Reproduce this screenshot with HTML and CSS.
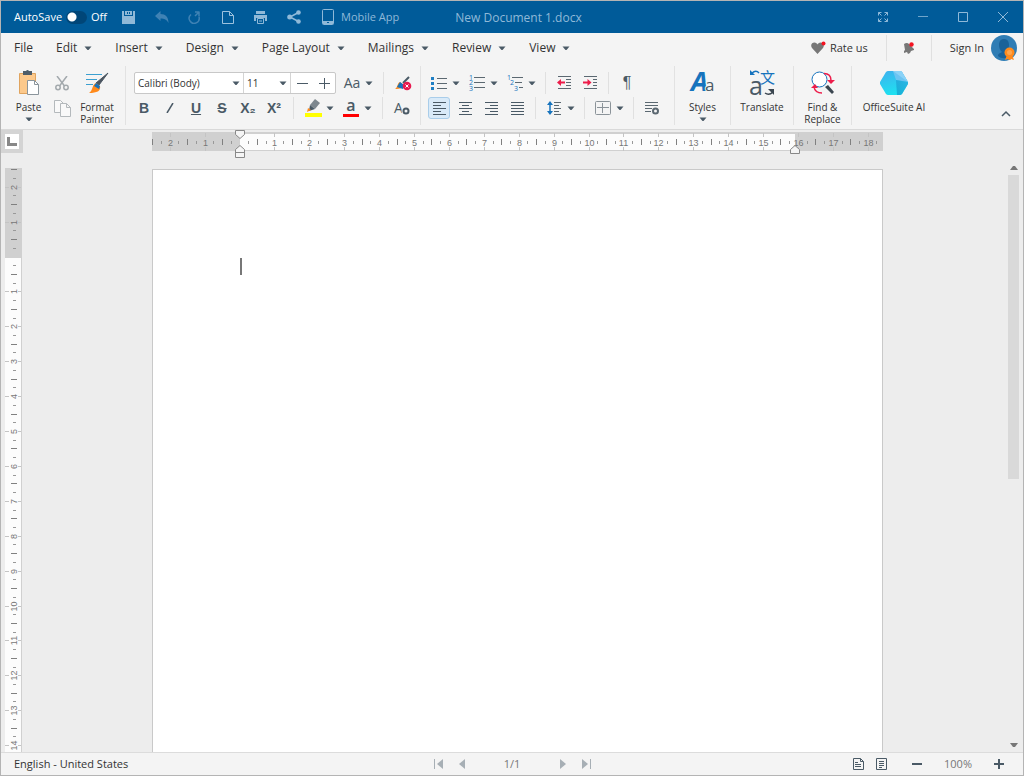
FILE: index.html
```html
<!DOCTYPE html>
<html lang="en">
<head>
  <title>New Document 1.docx</title>
  <meta charset="utf-8">
  <meta name="viewport" content="width=device-width, initial-scale=1">
  <link rel="stylesheet" href="styles.css">
</head>
<body>

  <!-- shared shapes -->
  <svg class="defs" width="0" height="0">
    <symbol id="caret" viewBox="0 0 8 5"><path d="M.500.500h7L4.500 4h-1z" fill="#4a5a66"/></symbol>
    <linearGradient id="hex" x1="0" y1="0" x2="0.300" y2="1">
      <stop offset="0" stop-color="#3fb0ee"/><stop offset="1" stop-color="#1fe0f0"/>
    </linearGradient>
    <linearGradient id="hexdark" x1="1" y1="0" x2="0" y2="1">
      <stop offset="0" stop-color="#2aa5dd"/><stop offset="1" stop-color="#0f8fc4"/>
    </linearGradient>
  </svg>

  <header class="titlebar">
    <div class="quick">
      <label class="autosave">AutoSave <input type="checkbox" class="toggle"> <span>Off</span></label>
      <button class="tb" aria-label="Save"><svg width="13" height="13" viewBox="0 0 13 13" fill="#8fb9d8"><path d="M0 0h2v5h9V0h2v13h-2V8H2v5H0z"/><path d="M2 8h9v5H2zM3 0h7v4H3z"/><path d="M5 1h1v2H5zM7 1h1v2H7z" fill="#005b99"/></svg></button>
      <button class="tb" aria-label="Undo"><svg width="14" height="12" viewBox="0 0 14 12"><path d="M0 5l5.500-5v3c5 0 8 3 8 9-2-3.500-4-4.500-8-4.500V10z" fill="#3f82b4"/></svg></button>
      <button class="tb" aria-label="Redo"><svg width="13" height="13" viewBox="0 0 13 13" fill="none" stroke="#3f82b4" stroke-width="1.500"><path d="M3 3.500A5 5 0 1 0 11 6M7 1h4.500M11 1v4.500M11 1L7 5"/></svg></button>
      <button class="tb" aria-label="New document"><svg width="12" height="13" viewBox="0 0 12 13" fill="none" stroke="#9cc2de"><path d="M.500.500h7l4 4v8H.500zM7.500.500v4h4"/></svg></button>
      <button class="tb" aria-label="Print"><svg width="13" height="13" viewBox="0 0 13 13"><path d="M2 0h9v3H2zM0 4h13v6h-2V7H2v3H0z" fill="#8fb9d8"/><path d="M3.500 7.500h6v5h-6z" fill="#005b99" stroke="#8fb9d8"/><path d="M5 10h3" stroke="#8fb9d8"/></svg></button>
      <button class="tb" aria-label="Share"><svg width="14" height="14" viewBox="0 0 14 14" fill="#8fb9d8"><path d="M11.500 2.500L3 7l8.500 4.500" fill="none" stroke="#8fb9d8" stroke-width="1.500"/><circle cx="11.500" cy="2.500" r="2.300"/><circle cx="2.700" cy="7" r="2.500"/><circle cx="11.500" cy="11.500" r="2.300"/></svg></button>
      <button class="tb mobile"><svg width="12" height="16" viewBox="0 0 12 16"><rect x=".5" y=".5" width="11" height="15" rx="1" fill="none" stroke="#8fb9d8"/><path d="M1 12h10v3H1z" fill="#8fb9d8"/><path d="M5 13h2v1H5z" fill="#005b99"/></svg> Mobile App</button>
    </div>
    <h1>New Document 1.docx</h1>
    <div class="window-controls">
      <button aria-label="Full screen"><svg width="10" height="10" viewBox="0 0 10 10" fill="none" stroke="#8fb9d8"><path d="M.500 3.500v-3h3M.500.500l3 3M6.500.500h3v3M9.500.500l-3 3M.500 6.500v3h3M.500 9.500l3-3M9.500 6.500v3h-3M9.500 9.500l-3-3"/></svg></button>
      <button aria-label="Minimize"><svg width="10" height="10" viewBox="0 0 10 10"><path d="M0 4.500h10" stroke="#6fa5cb"/></svg></button>
      <button aria-label="Maximize"><svg width="10" height="10" viewBox="0 0 10 10"><path d="M.500.500h9v9h-9z" fill="none" stroke="#8fb9d8"/></svg></button>
      <button aria-label="Close"><svg width="10" height="10" viewBox="0 0 10 10"><path d="M0 0l10 10M10 0L0 10" stroke="#8fb9d8"/></svg></button>
    </div>
  </header>

  <nav class="menubar">
    <button>File</button>
    <button>Edit <svg class="caret"><use href="#caret"/></svg></button>
    <button>Insert <svg class="caret"><use href="#caret"/></svg></button>
    <button>Design <svg class="caret"><use href="#caret"/></svg></button>
    <button>Page Layout <svg class="caret"><use href="#caret"/></svg></button>
    <button>Mailings <svg class="caret"><use href="#caret"/></svg></button>
    <button>Review <svg class="caret"><use href="#caret"/></svg></button>
    <button>View <svg class="caret"><use href="#caret"/></svg></button>
    <div class="account">
      <button class="rate"><svg width="15" height="14" viewBox="0 0 15 14"><path d="M6.500 13L1 7C-1 4 1 1.500 3.500 1.500c1.500 0 2.500 1 3 2 .5-1 1.500-2 3-2C12 1.500 14 4 12 7z" fill="#777"/><circle cx="12.500" cy="2.500" r="2" fill="#f31321"/></svg> Rate us</button>
      <button class="bell" aria-label="Notifications"><svg width="12" height="13" viewBox="0 0 12 13"><path d="M1 2q3-2 5 0l5 5v1L8 9l-1 2-2 1-1-2-3 1V9l1-1z" fill="#777"/><circle cx="8.500" cy="2.500" r="2.200" fill="#f31321"/></svg></button>
      <button class="signin">Sign In
        <svg width="26" height="26" viewBox="0 0 26 26"><circle cx="13" cy="13" r="13" fill="#2f7db5"/><path d="M7 21c0-3 3-3 4-4-2-2-3-4-3-7 0-4 2-6 5-6s5 2 5 6c0 3-1 5-3 7 1 1 4 1 4 4-3 3-9 3-12 0z" fill="#1a6299"/><path d="M16 20l-2 5 3-1 1 1h1l1-1 3 1-2-5z" fill="#ff8a1c"/><circle cx="18.500" cy="17.500" r="5" fill="#ff8a1c"/><circle cx="18.500" cy="17.500" r="2.500" fill="#ffa64d"/></svg>
      </button>
    </div>
  </nav>

  <section class="ribbon">
    <div class="group clipboard">
      <button class="big paste"><svg width="22" height="26" viewBox="0 0 22 26"><path d="M1.500 3.500h16v20h-16z" fill="#fcc98c" stroke="#e0a45f"/><path d="M5 1h3q1.500-2 3 0h3v4H5z" fill="#4e5d69"/><path d="M9.500 10.500h7l4 4v10h-11z" fill="#fff" stroke="#8b959c"/><path d="M16.500 10.500v4h4" fill="none" stroke="#8b959c"/></svg><span>Paste</span><svg class="caret"><use href="#caret"/></svg></button>
      <div class="stack">
        <button class="tool" aria-label="Cut"><svg width="14" height="15" viewBox="0 0 14 15" fill="none" stroke="#a3a9ad" stroke-width="1.500"><path d="M2 0l7.500 10M12 0L4.500 10"/><circle cx="3" cy="11.500" r="2.200"/><circle cx="11" cy="11.500" r="2.200"/></svg></button>
        <button class="tool" aria-label="Copy"><svg width="17" height="17" viewBox="0 0 17 17" fill="#f9f9f9" stroke="#b4b9bc"><path d="M.500.500h6l3 3v9h-9z"/><path d="M6.500 3.500h6l4 4v9h-10zM12.500 3.500v4h4"/></svg></button>
      </div>
      <button class="big painter"><svg width="24" height="24" viewBox="0 0 24 24"><path d="M1 3.500h16M1 8.500h11M1 13.500h7" stroke="#3b9fd0"/><path d="M23 2L14 14l-3-2z" fill="#4a5560" stroke="#4a5560"/><path d="M11 12l4 3c1 5-3 7-11 7 4-2 3-9 7-10z" fill="#ff8a1c"/><path d="M11 12l4 3-1 3-5-3z" fill="#1673bd"/></svg><span>Format<br>Painter</span></button>
    </div>

    <div class="group font">
      <div class="row">
        <div class="fields">
          <div class="combo family"><select aria-label="Font"><option>Calibri (Body)</option></select><svg class="caret"><use href="#caret"/></svg></div>
          <div class="combo size"><select aria-label="Font size"><option>11</option></select><svg class="caret"><use href="#caret"/></svg></div>
          <button class="step" aria-label="Shrink font"><svg width="11" height="11"><path d="M0 5.500h11" stroke="#4a5a66"/></svg></button>
          <button class="step" aria-label="Grow font"><svg width="11" height="11"><path d="M0 5.500h11M5.500 0v11" stroke="#4a5a66"/></svg></button>
        </div>
        <button class="drop case"><span>Aa</span><svg class="caret"><use href="#caret"/></svg></button>
        <i class="sep"></i>
        <button class="tool" aria-label="Clear formatting"><svg width="17" height="16" viewBox="0 0 17 16"><path d="M14 2L8 8" stroke="#4a5a66" stroke-width="2"/><path d="M5 7l4 3c0 3-4 4-9 4 3-2 2-6 5-7z" fill="#ff8a1c"/><path d="M5 7l4 3-1 4-6-2z" fill="#1673bd"/><circle cx="12" cy="11" r="4.300" fill="#e8194f"/><path d="M10.500 9.500l3 3m0-3l-3 3" stroke="#fff"/></svg></button>
      </div>
      <div class="row">
        <button class="tool glyph"><b>B</b></button>
        <button class="tool glyph" aria-label="Italic"><svg width="8" height="10" viewBox="0 0 8 10"><path d="M1 10L7 0" stroke="#4a5a66" stroke-width="1.500"/></svg></button>
        <button class="tool glyph"><u>U</u></button>
        <button class="tool glyph"><s>S</s></button>
        <button class="tool glyph">X₂</button>
        <button class="tool glyph">X²</button>
        <i class="sep"></i>
        <button class="drop" aria-label="Highlight"><svg width="17" height="18" viewBox="0 0 17 18"><path d="M10 0l5 4-5 6-5-4z" fill="#7d878e"/><path d="M5 6l5 4-6 2z" fill="#4a5a66"/><path d="M3 9l3 2-4 2z" fill="#ff8a1c"/><path d="M0 14h17v4H0z" fill="#ff0"/></svg><svg class="caret"><use href="#caret"/></svg></button>
        <button class="drop color"><span>a</span><svg class="caret"><use href="#caret"/></svg></button>
        <i class="sep"></i>
        <button class="tool" aria-label="Font settings"><svg class="lettered" width="17" height="15" viewBox="0 0 17 15"><text class="grey" x="0" y="12" font-size="14">A</text><circle cx="12" cy="10" r="4.500" fill="#f4f4f4"/><circle cx="12" cy="10" r="2.500" fill="none" stroke="#4a5a66" stroke-width="2"/></svg></button>
      </div>
    </div>

    <div class="group paragraph">
      <div class="row">
        <button class="drop" aria-label="Bullets"><svg width="16" height="14" viewBox="0 0 16 14"><path d="M6 2.500h10M6 7.500h10M6 12.500h10" stroke="#5b6871"/><path d="M0 1h3v3H0zM0 6h3v3H0zM0 11h3v3H0z" fill="#1f7fc4"/></svg><svg class="caret"><use href="#caret"/></svg></button>
        <button class="drop" aria-label="Numbering"><svg class="lettered" width="16" height="16" viewBox="0 0 16 16"><path d="M5 2.500h11M5 7.500h11M5 12.500h11" stroke="#5b6871"/><g class="blue" font-size="7"><text x="0" y="5">1</text><text x="0" y="10">2</text><text x="0" y="16">3</text></g></svg><svg class="caret"><use href="#caret"/></svg></button>
        <button class="drop" aria-label="Multilevel list"><svg class="lettered" width="16" height="16" viewBox="0 0 16 16"><path d="M5 2.500h11M8 7.500h7M12 12.500h4" stroke="#5b6871"/><g class="blue" font-size="7"><text x="0" y="5">1</text><text x="3" y="10">2</text><text x="7" y="16">3</text></g></svg><svg class="caret"><use href="#caret"/></svg></button>
        <i class="sep"></i>
        <button class="tool" aria-label="Decrease indent"><svg width="14" height="14" viewBox="0 0 14 14"><path d="M1 .500h13M9 3.500h5M9 6.500h5M9 9.500h5M1 12.500h13" stroke="#5b6871"/><path d="M2 6.500h6" stroke="#ed1c4a" stroke-width="2"/><path d="M0 6.500L4 3v7z" fill="#ed1c4a"/></svg></button>
        <button class="tool" aria-label="Increase indent"><svg width="14" height="14" viewBox="0 0 14 14"><path d="M1 .500h13M10 3.500h4M10 6.500h4M10 9.500h4M1 12.500h13" stroke="#5b6871"/><path d="M0 6.500h6" stroke="#ed1c4a" stroke-width="2"/><path d="M8.500 6.500L4.500 3v7z" fill="#ed1c4a"/></svg></button>
        <i class="sep"></i>
        <button class="tool pilcrow" aria-label="Formatting marks">¶</button>
      </div>
      <div class="row">
        <button class="tool active" aria-label="Align left"><svg width="13" height="13"><path d="M0 .500h13M0 3.500h8M0 6.500h13M0 9.500h8M0 12.500h13" stroke="#4a5a66"/></svg></button>
        <button class="tool" aria-label="Center"><svg width="13" height="13"><path d="M0 .500h13M3 3.500h7M0 6.500h13M3 9.500h7M0 12.500h13" stroke="#4a5a66"/></svg></button>
        <button class="tool" aria-label="Align right"><svg width="13" height="13"><path d="M0 .500h13M5 3.500h8M0 6.500h13M5 9.500h8M0 12.500h13" stroke="#4a5a66"/></svg></button>
        <button class="tool" aria-label="Justify"><svg width="13" height="13"><path d="M0 .500h13M0 3.500h13M0 6.500h13M0 9.500h13M0 12.500h13" stroke="#4a5a66"/></svg></button>
        <i class="sep"></i>
        <button class="drop" aria-label="Line spacing"><svg width="14" height="14" viewBox="0 0 14 14"><path d="M7 1.500h7M7 4.500h5M7 7.500h7M7 10.500h5M7 13.500h7" stroke="#5b6871"/><path d="M3 3v8" stroke="#1673bd" stroke-width="1.500"/><path d="M3 0l3 4H0zM3 14l3-4H0z" fill="#1673bd"/></svg><svg class="caret"><use href="#caret"/></svg></button>
        <i class="sep"></i>
        <button class="drop" aria-label="Borders"><svg width="16" height="14" viewBox="0 0 16 14" fill="none" stroke="#8b9399"><rect x=".5" y=".5" width="15" height="13" rx="1"/><path d="M7.500 2v10M2 6.500h12"/></svg><svg class="caret"><use href="#caret"/></svg></button>
        <i class="sep"></i>
        <button class="tool" aria-label="Paragraph settings"><svg width="14" height="14" viewBox="0 0 14 14" fill="none" stroke="#5b6871"><path d="M0 1.500h13M0 4.500h13M0 7.500h7M0 10.500h6"/><circle cx="10.500" cy="10" r="2.500" stroke-width="2"/></svg></button>
      </div>
    </div>

    <div class="group"><button class="big styles"><svg class="lettered" width="24" height="26" viewBox="0 0 24 26"><text class="blue" x="0" y="21" font-size="27" font-weight="bold" font-style="italic">A</text><text class="grey halo" x="14" y="21" font-size="17">a</text></svg><span>Styles</span><svg class="caret"><use href="#caret"/></svg></button></div>
    <div class="group"><button class="big translate"><svg class="lettered" width="26" height="28" viewBox="0 0 26 28"><text class="grey" x="0" y="26" font-size="25">a</text><text class="blue cjk" x="11" y="14" font-size="15">文</text><path d="M3 4q4-3.500 7 0" fill="none" stroke="#1673bd" stroke-width="1.500"/><path d="M1 1v5h5z" fill="#1673bd"/><path d="M16 24q4 3 8-1" fill="none" stroke="#3b4650" stroke-width="1.500"/><path d="M19 20h6v6z" fill="#3b4650"/></svg><span>Translate</span></button></div>
    <div class="group"><button class="big find"><svg width="24" height="26" viewBox="0 0 24 26" fill="none"><circle cx="8.500" cy="9.500" r="7.500" fill="#fff" stroke="#1673bd"/><path d="M14 17l3-2 6 7-2 2z" fill="#3b4650"/><path d="M13 3.500q7 0 7 7M11 23q-7 0-8-6" stroke="#ed1c4a" stroke-width="1.500"/><path d="M16 10h8l-4 4zM0 18l4-4 3 4z" fill="#ed1c4a"/></svg><span>Find &amp;<br>Replace</span></button></div>
    <div class="group"><button class="big ai"><svg width="28" height="26" viewBox="0 0 28 26"><path d="M8 1h12q1 0 2 1l6 10v2l-6 10q-1 1-2 1H8q-1 0-2-1L0 14v-2L6 2q1-1 2-1z" fill="url(#hex)"/><path d="M13 1h7q1 0 2 1l6 10-12-2z" fill="#6cc4f2"/><path d="M16 10l12 2v2l-6 10q-1 1-2 1h-3z" fill="url(#hexdark)" opacity=".6"/><path d="M13 1h7q1 0 2 1l6 10z" fill="#8ad2f7"/></svg><span>OfficeSuite AI</span></button></div>
    <button class="collapse" aria-label="Collapse ribbon"><svg width="10" height="7"><path d="M1 6l4-4 4 4" fill="none" stroke="#4a5a66" stroke-width="1.500"/></svg></button>
  </section>

  <main class="workspace">
    <button class="tabstop" aria-label="Tab stop"><svg width="10" height="9"><path d="M1.500 0v7.500H10" fill="none" stroke="#888" stroke-width="3"/></svg></button>
    <div class="ruler-row">
      <div class="hruler">
        <svg id="hruler" width="731" height="18"></svg>
        <svg class="indent" width="12" height="30" viewBox="0 0 12 30" fill="#f5f5f5" stroke="#888"><path d="M1.500 1.500h9v4l-4.500 4-4.500-4zM1.500 28.500v-8l4.500-4 4.500 4v8zM1.500 23.500h9"/></svg>
        <svg class="indent right" width="12" height="10" viewBox="0 0 12 10" fill="#f5f5f5" stroke="#888"><path d="M1.500 8.500v-4l4.500-4 4.500 4v4z"/></svg>
      </div>
    </div>
    <div class="vruler"><svg id="vruler" width="17" height="100%"></svg></div>
    <div class="canvas">
      <article class="page"><span class="cursor"></span></article>
    </div>
    <div class="scrollbar">
      <svg width="8" height="5"><path d="M0 5h8L5 1H3z" fill="#777"/></svg>
      <div class="track"><div class="thumb"></div></div>
      <svg width="8" height="5"><path d="M0 0h8L5 4H3z" fill="#777"/></svg>
    </div>
  </main>

  <footer class="statusbar">
    <span class="language">English - United States</span>
    <div class="pager">
      <button aria-label="First page"><svg width="10" height="10"><path d="M.500 0v10" stroke="#a7afb5"/><path d="M9 0v10L3 5z" fill="#a7afb5"/></svg></button>
      <button aria-label="Previous page"><svg width="6" height="10"><path d="M6 0v10L0 5z" fill="#a7afb5"/></svg></button>
      <span>1/1</span>
      <button aria-label="Next page"><svg width="6" height="10"><path d="M0 0v10l6-5z" fill="#a7afb5"/></svg></button>
      <button aria-label="Last page"><svg width="10" height="10"><path d="M9.500 0v10" stroke="#a7afb5"/><path d="M1 0v10l6-5z" fill="#a7afb5"/></svg></button>
    </div>
    <div class="view">
      <button aria-label="Print view"><svg width="11" height="12" viewBox="0 0 11 12" fill="none" stroke="#4a5a66"><path d="M.500.500h7l3 3v8H.500zM7.500.500v3h3M2 4.500h3M2 6.500h6M2 8.500h6"/></svg></button>
      <button aria-label="Web view"><svg width="11" height="12" viewBox="0 0 11 12" fill="none" stroke="#4a5a66"><path d="M.500.500h10v11H.500zM3 3.500h5M3 5.500h5M3 7.500h5M3 9.500h3"/></svg></button>
      <button class="zoom-out" aria-label="Zoom out"><svg width="10" height="10"><path d="M0 5h10" stroke="#4a5a66" stroke-width="2"/></svg></button>
      <span>100%</span>
      <button aria-label="Zoom in"><svg width="10" height="10"><path d="M0 5h10M5 0v10" stroke="#4a5a66" stroke-width="2"/></svg></button>
    </div>
  </footer>

  <script>
    const CM = 34.9
    const Q = id => document.getElementById(id)
    const line = (x1, y1, x2, y2, c) => `<path d="M${x1} ${y1}L${x2} ${y2}" stroke="${c}"/>`

    // quarter ticks are short, halves tall, whole centimetres carry a number
    const ruler = (el, zero, length, vertical, grey) => {
      let out = grey.map(([a, b]) => vertical
        ? `<rect x="0" y="${a}" width="17" height="${b - a}" fill="#d0d0d0"/>`
        : `<rect x="${a}" y="0" width="${b - a}" height="18" fill="#d0d0d0"/>`).join('')
      for (let q = -10; zero + q * CM / 4 < length - 1; q++) {
        const p = Math.floor(zero + q * CM / 4) + .5
        if (q === 0 || p < 0) continue
        if (q % 4) {
          const [a, b] = q % 2 ? [8, 11] : [6, 12]
          const c = q % 2 ? '#999' : '#808080'
          out += vertical ? line(a, p, b, p, c) : line(p, a, p, b, c)
          continue
        }
        const n = Math.abs(q / 4)
        if (vertical) {
          out += line(0, p, 4, p, '#c4c4c4') + line(13, p, 17, p, '#c4c4c4')
          out += `<text transform="translate(12 ${p}) rotate(-90)">${n}</text>`
        } else {
          out += line(p, 0, p, 4, '#c4c4c4') + line(p, 14, p, 18, '#c4c4c4')
          out += `<text x="${p}" y="13">${n}</text>`
        }
      }
      el.innerHTML = out
    }
    const draw = () => {
      ruler(Q('hruler'), 88, 731, false, [[0, 88], [643, 731]])
      ruler(Q('vruler'), 89, Q('vruler').parentElement.clientHeight, true, [[0, 90]])
    }
    draw()
    addEventListener('resize', draw)
  </script>

</body>
</html>
```
FILE: styles.css
```css
* {
  box-sizing: border-box;
}
html {
  height: 100%;
}
body {
  margin: 0;
  height: 100%;
  display: flex;
  flex-direction: column;
  border: 1px solid #b4b4b4;
  background: #f4f4f4;
  color: #333;
  font: 12px/16px "Open Sans", "Noto Sans", sans-serif;
  overflow: hidden;
}
button, select {
  margin: 0;
  padding: 0;
  border: 0;
  background: none;
  color: inherit;
  font: inherit;
}
button {
  display: flex;
  align-items: center;
  justify-content: center;
  white-space: nowrap;
}
svg {
  flex-shrink: 0;
}
.defs {
  position: absolute;
}
.caret {
  width: 8px;
  height: 5px;
}
.lettered {
  overflow: visible;
  font-family: "Open Sans", sans-serif;
}
.blue {
  fill: #1673bd;
}
.grey {
  fill: #4a5a66;
}
.halo {
  stroke: #f4f4f4;
  stroke-width: 2px;
  paint-order: stroke;
}
.cjk {
  font-family: "Noto Sans CJK SC", sans-serif;
}

/* title bar */
.titlebar {
  display: flex;
  align-items: center;
  height: 32px;
  flex-shrink: 0;
  padding-left: 6px;
  background: #005b99;
  color: #8fb9d8;
}
.titlebar h1 {
  margin: 0;
  padding-top: 2px;
  font-size: 12px;
  font-weight: normal;
}
.quick, .window-controls {
  flex: 1;
  display: flex;
  align-items: center;
}
.quick {
  padding-left: 7px;
}
.autosave {
  display: flex;
  align-items: center;
  gap: 4px;
  width: 98px;
  color: #fff;
  font-size: 11px;
}
.toggle {
  appearance: none;
  width: 21px;
  height: 13px;
  margin: 0;
  border-radius: 7px;
  background: radial-gradient(circle at 6px 6px, #fff 4px, #004678 5px);
}
.tb {
  width: 33px;
  height: 32px;
}
.tb.mobile {
  width: auto;
  gap: 7px;
  padding-left: 12px;
  font-size: 11px;
}
.window-controls {
  justify-content: flex-end;
}
.window-controls button {
  width: 40px;
  height: 32px;
}

/* menu */
.menubar {
  display: flex;
  align-items: center;
  gap: 23px;
  height: 30px;
  flex-shrink: 0;
  padding: 0 6px 0 13px;
}
.menubar button {
  gap: 7px;
}
.account {
  display: flex;
  align-items: center;
  margin-left: auto;
  font-size: 11px;
}
.account button {
  height: 26px;
}
.account .rate {
  gap: 4px;
  padding-right: 18px;
}
.account .bell {
  width: 46px;
  border: solid #e0e0e0;
  border-width: 0 1px;
}
.account .signin {
  padding-left: 18px;
}

/* ribbon */
.ribbon {
  display: flex;
  height: 67px;
  flex-shrink: 0;
  padding: 3px 0 4px 7px;
  border-bottom: 1px solid #d9d9d9;
}
.group {
  border-right: 1px solid #e2e2e2;
}
.group:nth-last-child(2) {
  border-right: 0;
}
.clipboard {
  display: flex;
  padding-right: 6px;
}
.font, .paragraph {
  display: flex;
  flex-direction: column;
  gap: 3px;
  padding: 6px 4px 0 5px;
}
.paragraph {
  padding-right: 9px;
}
.row {
  display: flex;
  align-items: center;
  height: 22px;
}
.stack {
  display: flex;
  flex-direction: column;
  gap: 3px;
  padding-top: 6px;
}
.sep {
  width: 1px;
  height: 22px;
  margin: 0 6px;
  background: #e0e0e0;
}
.paragraph .sep {
  margin: 0 5px;
}
.tool {
  width: 26px;
  height: 22px;
}
.tool.active {
  width: 22px;
  margin: 0 2px;
  border: 1px solid #a9cdea;
  border-radius: 3px;
  background: #d9eaf8;
}
.glyph {
  color: #4a5a66;
  font: 600 14px/20px "Liberation Sans", sans-serif;
}
.pilcrow {
  color: #4a5a66;
  font: 16px/20px "Liberation Sans", sans-serif;
}
.drop {
  display: grid;
  grid-template-columns: 22px 8px;
  gap: 2px;
  place-items: center;
  width: 38px;
  height: 22px;
  padding: 0 4px 0 2px;
}
.case {
  font-size: 14px;
  color: #4a5a66;
}
.color span {
  width: 16px;
  height: 18px;
  border-bottom: 3px solid #f00;
  color: #4a5a66;
  font: 600 16px/13px "Open Sans", sans-serif;
}
.fields {
  display: flex;
  height: 22px;
  margin: 0 3px;
  border: 1px solid #c8c8c8;
  border-radius: 2px;
  background: #fff;
}
.combo {
  display: grid;
  grid-template-columns: 1fr 14px;
  align-items: center;
  border-right: 1px solid #d4d4d4;
  font-size: 10px;
}
.combo select {
  appearance: none;
  grid-area: 1 / 1 / 2 / 3;
  height: 20px;
  padding-left: 3px;
}
.combo .caret {
  grid-area: 1 / 2;
  justify-self: center;
  pointer-events: none;
}
.family {
  width: 109px;
}
.size {
  width: 47px;
}
.step {
  width: 22px;
}
.big {
  flex-direction: column;
  justify-content: flex-start;
  width: 44px;
  font-size: 10px;
  line-height: 12px;
}
.big > svg:first-child {
  height: 28px;
  margin: 3px 0 4px;
}
.big .caret {
  margin-top: 4px;
}
.paste {
  width: 41px;
}
.styles {
  width: 55px;
}
.translate {
  width: 62px;
}
.find {
  width: 57px;
}
.ai {
  width: 84px;
}
.collapse {
  align-self: flex-end;
  margin-left: auto;
  padding: 4px 12px 8px;
}

/* document area */
.workspace {
  flex: 1;
  min-height: 0;
  display: grid;
  grid-template: 38px 1fr / 22px 1fr 15px;
  background: #ededed;
}
.tabstop {
  width: 22px;
  height: 23px;
  border: 4px solid #d4d4d4;
  background: #fff;
}
.ruler-row, .canvas {
  display: flex;
  justify-content: center;
  padding-left: 4px;
}
.ruler-row {
  padding-top: 3px;
}
.hruler {
  position: relative;
  height: 18px;
  background: #fcfcfc;
  box-shadow: inset 0 1px #d0d0d0, 0 -1px #d0d0d0, inset 0 -1px #d0d0d0;
}
.hruler text, .vruler text {
  font: 9px "Liberation Sans", sans-serif;
  fill: #777;
  text-anchor: middle;
}
.indent {
  position: absolute;
  left: 82px;
  top: -4px;
}
.indent.right {
  left: 637px;
  top: 12px;
}
.vruler {
  grid-row: 2;
  width: 17px;
  margin-left: 4px;
  overflow: hidden;
  background: #fcfcfc;
  border-right: 1px solid #d0d0d0;
}
.vruler svg {
  display: block;
}
.canvas {
  overflow: hidden;
  padding-top: 1px;
}
.page {
  width: 731px;
  padding: 88px 87px;
  border: 1px solid #c9c9c9;
  border-bottom: 0;
  background: #fff;
}
.cursor {
  display: block;
  width: 2px;
  height: 17px;
  background: #777;
}
.scrollbar {
  grid-area: 1 / 3 / 3 / 4;
  display: flex;
  flex-direction: column;
  align-items: center;
  gap: 5px;
  padding: 35px 4px 4px 0;
}
.track {
  flex: 1;
  width: 11px;
}
.thumb {
  height: 54%;
  background: #d9d9d9;
}

/* status bar */
.statusbar {
  display: flex;
  align-items: center;
  height: 23px;
  flex-shrink: 0;
  border-top: 1px solid #dcdcdc;
  font-size: 11px;
}
.language, .view {
  flex: 1;
}
.language {
  padding-left: 13px;
}
.pager, .view {
  display: flex;
  align-items: center;
  color: #777;
}
.pager button {
  width: 23px;
}
.pager span {
  width: 78px;
  text-align: center;
}
.view {
  justify-content: flex-end;
  padding-right: 13px;
}
.view button {
  width: 23px;
}
.view .zoom-out {
  width: 48px;
}
.view span {
  width: 34px;
  margin-right: 12px;
  text-align: center;
}
```
